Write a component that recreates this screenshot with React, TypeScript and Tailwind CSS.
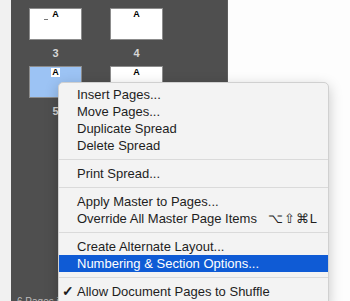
import React from "react";

type MenuEntry =
  | { kind: "item"; label: string; shortcut?: string; checked?: boolean; active?: boolean }
  | { kind: "sep" };

const menu: MenuEntry[] = [
  { kind: "item", label: "Insert Pages..." },
  { kind: "item", label: "Move Pages..." },
  { kind: "item", label: "Duplicate Spread" },
  { kind: "item", label: "Delete Spread" },
  { kind: "sep" },
  { kind: "item", label: "Print Spread..." },
  { kind: "sep" },
  { kind: "item", label: "Apply Master to Pages..." },
  { kind: "item", label: "Override All Master Page Items", shortcut: "⌥⇧⌘L" },
  { kind: "sep" },
  { kind: "item", label: "Create Alternate Layout..." },
  { kind: "item", label: "Numbering & Section Options...", active: true },
  { kind: "sep" },
  { kind: "item", label: "Allow Document Pages to Shuffle", checked: true },
];

function Thumb({ selected, dash }: { selected?: boolean; dash?: boolean }) {
  return (
    <div
      className={
        "relative h-[32px] w-[53px] border border-[#8c8c8c] " +
        (selected ? "bg-[#9cc3f4]" : "bg-white")
      }
    >
      <div className="flex justify-center pt-[1px]">
        <span
          className={
            "px-[1px] text-[9px] font-bold leading-[9px] text-black " +
            (selected ? "bg-white" : "")
          }
        >
          A
        </span>
      </div>
      {dash && <div className="absolute left-[14px] top-[10px] h-[1px] w-[4px] bg-[#777]" />}
    </div>
  );
}

function Label({ n }: { n: string }) {
  return (
    <div className="flex h-[26px] items-center justify-center text-[11px] font-bold text-[#d6d6d6]">
      {n}
    </div>
  );
}

export default function App() {
  return (
    <div
      className="relative flex h-[301px] w-[350px] overflow-hidden bg-white"
      style={{ fontFamily: '"Liberation Sans", Arial, sans-serif' }}
    >
      <div className="w-[11px] shrink-0 bg-[#f1f1f1]" />
      <div className="relative w-[217px] shrink-0 border-r border-[#5e5e5e] bg-[#4f4f4f] pl-[18px] pt-[8px]">
        <div className="grid grid-cols-[53px_53px] gap-x-[28px]">
          <div>
            <Thumb dash />
            <Label n="3" />
          </div>
          <div>
            <Thumb />
            <Label n="4" />
          </div>
          <div>
            <Thumb selected />
            <Label n="5" />
          </div>
          <div>
            <Thumb />
          </div>
        </div>
        <div className="absolute left-[6px] top-[297px] whitespace-nowrap text-[10px] leading-[10px] text-[#bdbdbd]">
          6 Pages in 3 Spreads
        </div>
      </div>
      <div className="flex-1 bg-[#fdfdfd]" />

      {/* context menu */}
      <div className="absolute left-[58px] top-[82px] w-[271px] rounded-[5px] border border-[#d0d0d0] bg-[#f3f3f3] pt-[3px] pb-[6px] text-[13px] text-[#1e1e1e] shadow-[0_4px_14px_rgba(0,0,0,0.22)]">
        {menu.map((m, i) =>
          m.kind === "sep" ? (
            <div key={i} className="py-[5px]">
              <div className="h-[1px] bg-[#dadada]" />
            </div>
          ) : (
            <div
              key={i}
              className={
                "flex h-[17px] items-center pl-[18px] pr-[10px] leading-[17px] " +
                (m.active ? "bg-[#0f5bd5] text-white" : "")
              }
            >
              <span className="relative flex-1 whitespace-nowrap">
                {m.checked && (
                  <span className="absolute left-[-15px] top-0 text-[14px] font-bold">✓</span>
                )}
                {m.label}
              </span>
              {m.shortcut && <span className="whitespace-nowrap tracking-[1px]">{m.shortcut}</span>}
            </div>
          )
        )}
      </div>
    </div>
  );
}
